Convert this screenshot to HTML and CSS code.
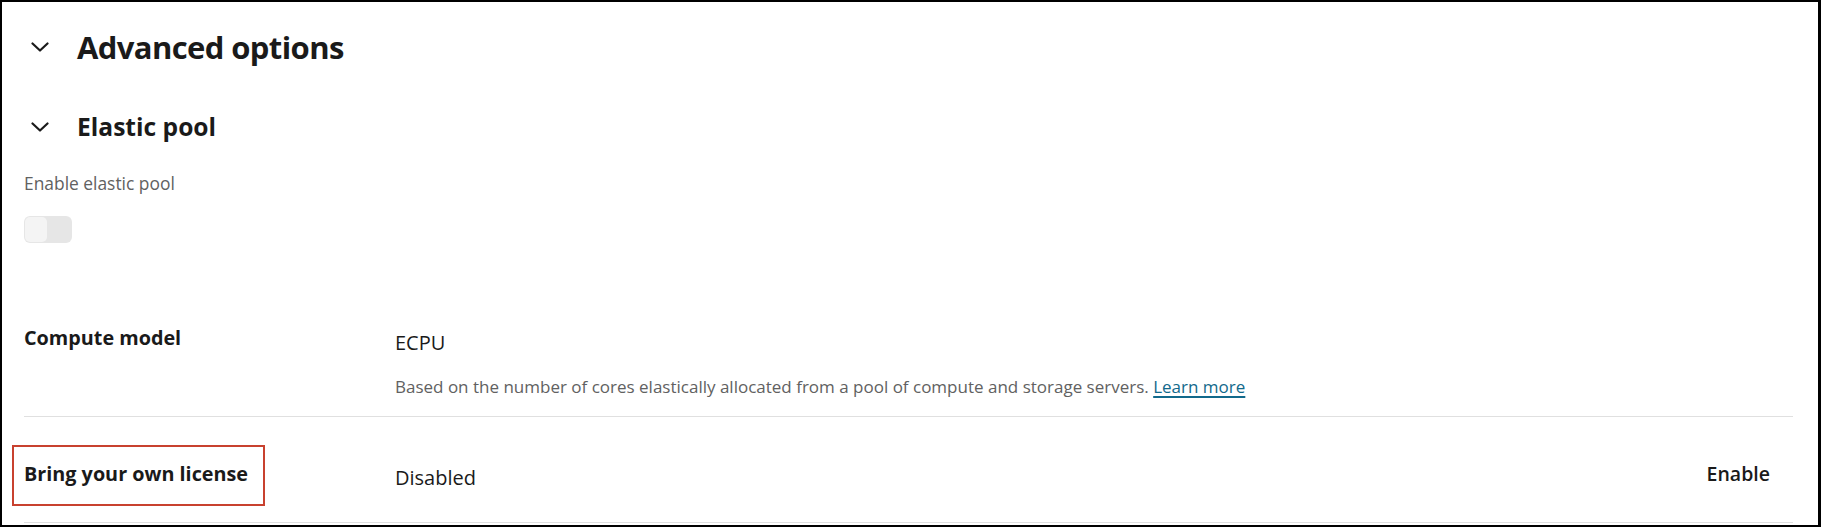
FILE: index.html
```html
<!DOCTYPE html>
<html lang="en">
<head>
<meta charset="utf-8">
<title>Advanced options</title>
<link rel="stylesheet" href="styles.css">
</head>
<body>
<div class="frame">
  <div class="sec-head sec-head--main">
    <svg class="chevron" width="18" height="10" viewBox="0 0 18 10" aria-hidden="true"><path d="M1.5 1.5 L9 8.5 L16.5 1.5" fill="none" stroke="#1a1a1a" stroke-width="2.2" stroke-linecap="round" stroke-linejoin="round"/></svg>
    <h2 class="title-main">Advanced options</h2>
  </div>
  <div class="sec-head sec-head--sub">
    <svg class="chevron" width="18" height="10" viewBox="0 0 18 10" aria-hidden="true"><path d="M1.5 1.5 L9 8.5 L16.5 1.5" fill="none" stroke="#1a1a1a" stroke-width="2.2" stroke-linecap="round" stroke-linejoin="round"/></svg>
    <h3 class="title-sub">Elastic pool</h3>
  </div>
  <div class="field">
    <div class="field-label">Enable elastic pool</div>
    <div class="toggle" role="switch" aria-checked="false"><span class="knob"></span></div>
  </div>
  <div class="row row--compute">
    <div class="row-label">Compute model</div>
    <div class="row-value">
      <div class="value">ECPU</div>
      <div class="desc">Based on the number of cores elastically allocated from a pool of compute and storage servers. <a href="#" class="link">Learn more</a></div>
    </div>
    <div class="row-action"></div>
  </div>
  <div class="row row--byol">
    <div class="row-label"><span class="highlight">Bring your own license</span></div>
    <div class="row-value">
      <div class="value value--byol">Disabled</div>
    </div>
    <div class="row-action"><span class="action">Enable</span></div>
  </div>
</div>
</body>
</html>
```
FILE: styles.css
```css
* { box-sizing: border-box; }
html, body { margin: 0; padding: 0; background: #fff; }
body {
  font-family: "Open Sans", "Noto Sans", "Liberation Sans", sans-serif;
  color: #1a1a1a;
  width: 1821px;
  height: 527px;
  overflow: hidden;
}
.frame {
  width: 1821px;
  height: 527px;
  border-style: solid;
  border-color: #000;
  border-width: 2px 3px 2px 2px;
  padding: 25px 25px 0 22px;
  background: #fff;
}
.sec-head {
  display: flex;
  align-items: center;
  height: 40px;
}
.chevron { margin-left: 7px; margin-right: 28px; flex: none; }
.title-main {
  margin: 0;
  font-size: 31px;
  font-weight: 700;
  line-height: 40px;
  letter-spacing: -0.6px;
}
.sec-head--sub { margin-top: 44px; height: 32px; }
.title-sub {
  margin: 0;
  font-size: 24.6px;
  font-weight: 700;
  line-height: 32px;
}
.field { margin-top: 28px; }
.field-label {
  font-size: 17.4px;
  line-height: 24px;
  color: #616161;
}
.toggle {
  margin-top: 21px;
  width: 48px;
  height: 27px;
  border-radius: 6px;
  background: #e6e6e6;
  padding: 1px;
}
.knob {
  display: block;
  width: 22px;
  height: 25px;
  border-radius: 5px;
  background: #f4f4f4;
}
.row {
  display: grid;
  grid-template-columns: 371px 1fr auto;
  align-items: start;
  border-bottom: 1px solid #e0e0e0;
}
.row--compute { padding-top: 81px; padding-bottom: 18px; }
.row--byol { padding-top: 43px; padding-bottom: 30px; }
.row-label {
  font-size: 19.8px;
  font-weight: 700;
  line-height: 28px;
}
.value {
  margin-top: 5px;
  font-size: 20px;
  line-height: 28px;
}
.value--byol { margin-top: 4px; }
.desc {
  margin-top: 19px;
  font-size: 17px;
  line-height: 22px;
  color: #616161;
}
.link {
  color: #11698b;
  text-decoration: underline;
  text-decoration-thickness: 2px;
  text-underline-offset: 3px;
}
.row-action { padding-right: 23px; }
.action {
  font-size: 19.5px;
  font-weight: 600;
  line-height: 28px;
}
.highlight { position: relative; display: inline-block; }
.highlight::after {
  content: "";
  position: absolute;
  left: -12px;
  top: -15px;
  width: 249px;
  height: 57px;
  border: 2px solid #c8412f;
}
```
